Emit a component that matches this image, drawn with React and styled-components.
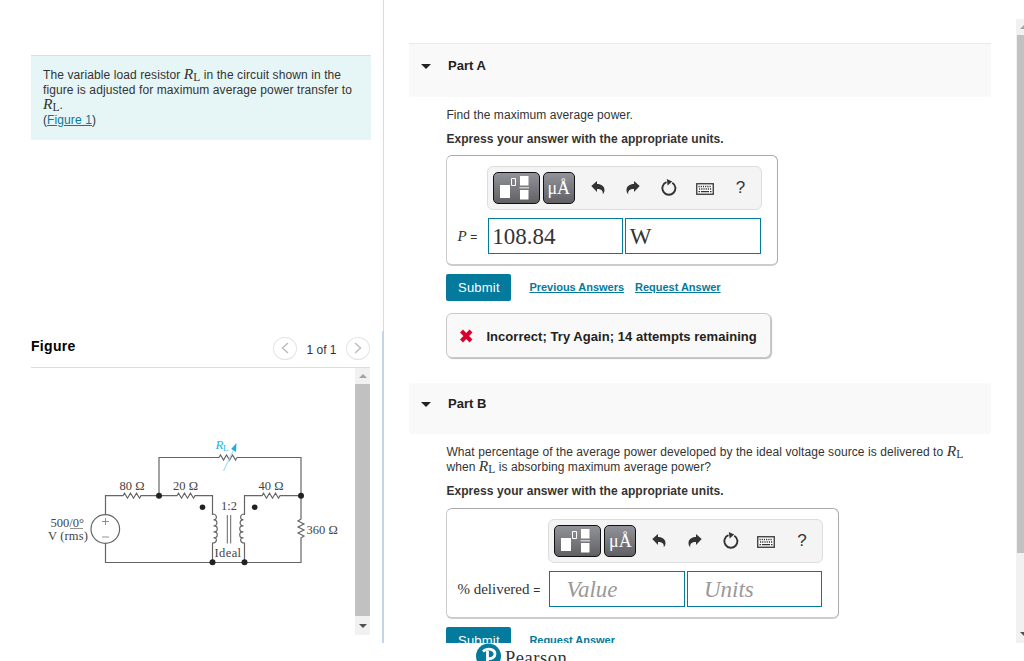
import React from "react"
import styled, { createGlobalStyle } from "styled-components"

const GlobalStyle = createGlobalStyle`
  * { box-sizing: border-box; }
  body {
    margin: 0;
    background: #fff;
    color: #333;
    font-family: "Liberation Sans", Arial, sans-serif;
    font-size: 12px;
    overflow: hidden;
  }
`

const StyledPage = styled.div`
  height: 661px;
  width: 1024px;
  display: flex;
  flex-direction: column;
  overflow: hidden;
`

const StyledMain = styled.div`
  display: flex;
  height: 643px;
  flex: none;
  overflow: hidden;
`

const StyledSide = styled.div`
  width: 384px;
  flex: none;
  display: flex;
  flex-direction: column;
`

const StyledIntro = styled.div`
  height: 331px;
  padding: 55px 12px 0 31px;
  border-right: 1px solid #d3dae2;
`

const StyledProblem = styled.div`
  height: 85px;
  padding: 12px 12px 0;
  background: #e6f6f6;
  border-top: 1px solid #dcdfdf;
  letter-spacing: 0.1px;
  line-height: 15px;
  white-space: nowrap;
`

const StyledFigureArea = styled.div`
  height: 312px;
  padding: 0 12px 0 31px;
  border-right: 2px solid #c3d5e6;
`

const StyledFigureHead = styled.div`
  height: 37px;
  display: flex;
  align-items: center;
  border-bottom: 1px solid #dcdcdc;
`

const StyledFigureTitle = styled.div`
  flex: 1;
  color: #000;
  font-size: 14px;
  font-weight: bold;
  letter-spacing: 0.3px;
  padding-bottom: 7px;
`

const StyledPager = styled.div`
  display: flex;
  align-items: center;
  gap: 9px;
  padding-bottom: 2px;
`

const StyledPagerText = styled.div`
  width: 31px;
  padding-top: 3px;
  text-align: center;
  white-space: nowrap;
`

const RoundButton = styled.div`
  width: 24px;
  height: 23px;
  border: 1px solid #e4e4e4;
  border-radius: 50%;
  display: flex;
  align-items: center;
  justify-content: center;
`

const StyledFigureBody = styled.div`
  display: flex;
  height: 267px;
`

const StyledScrollbar = styled.div`
  width: ${({ $width }) => $width}px;
  height: ${({ $height }) => $height}px;
  margin-top: ${({ $top }) => $top || 0}px;
  flex: none;
  overflow: hidden;
  display: flex;
  flex-direction: column;
  background: #f1f1f1;
`

const StyledScrollEnd = styled.div`
  height: ${({ $height }) => $height}px;
  flex: none;
  display: flex;
  align-items: center;
  justify-content: ${({ $cut }) => ($cut ? "flex-start" : "center")};
  padding-left: ${({ $cut }) => ($cut ? 4 : 0)}px;
`

const StyledThumb = styled.div`
  height: ${({ $height }) => $height}px;
  flex: none;
  background: #c1c1c1;
  border-left: ${({ $edge }) => ($edge ? "1px solid #f1f1f1" : "0")};
`

const StyledTrack = styled.div`
  flex: 1;
`

const Triangle = styled.div`
  width: 0;
  flex: none;
  border: ${({ $size }) => $size}px solid transparent;
  border-${({ $up }) => ($up ? "bottom" : "top")}-color: ${({ $color }) => $color};
  border-${({ $up }) => ($up ? "top" : "bottom")}-width: 0;
`

const StyledContent = styled.div`
  flex: 1;
  display: flex;
  justify-content: space-between;
  padding-left: 25px;
`

const StyledParts = styled.div`
  width: 582px;
`

const StyledPartHead = styled.div`
  display: flex;
  height: ${({ $first }) => ($first ? 54 : 51)}px;
  margin-top: ${({ $first }) => ($first ? 43 : 25)}px;
  padding: ${({ $first }) => ($first ? "14px 0 0 12px" : "13px 0 0 12px")};
  gap: 17px;
  background: #f9f9f9;
  border-top: ${({ $first }) => ($first ? "1px solid #ebebeb" : "0")};

  ${Triangle} {
    margin-top: 6px;
  }
`

const StyledPartTitle = styled.div`
  color: #222;
  font-size: 13px;
  font-weight: bold;
  line-height: 16px;
`

const StyledPartBody = styled.div`
  padding: 11px 0 0 37.400px;
`

const StyledQuestion = styled.div`
  letter-spacing: 0.08px;
  line-height: 15px;
  white-space: nowrap;
`

const StyledInstruction = styled.div`
  margin-top: 9px;
  font-weight: bold;
  letter-spacing: 0.07px;
  line-height: 15px;
`

const StyledAnswerBox = styled.div`
  width: ${({ $width }) => $width}px;
  height: 111px;
  margin-top: ${({ $top }) => $top}px;
  padding: 10px 15px 0 10px;
  border: 1px solid #aaa;
  border-bottom: 2px solid #ccc;
  border-left-color: #ccc;
  border-radius: 6px;
  display: flex;
  flex-direction: column;
  align-items: flex-end;
  gap: 8px;
`

const StyledToolbar = styled.div`
  width: 275px;
  height: 44px;
  padding: 0 0 1px 5px;
  display: flex;
  align-items: center;
  background: #f4f4f4;
  border: 1px solid #ddd;
  border-radius: 6px;
`

const ToolButton = styled.div`
  width: ${({ $width }) => $width}px;
  height: 32px;
  flex: none;
  margin-right: 3px;
  padding: ${({ $pad }) => $pad};
  display: flex;
  align-items: center;
  justify-content: center;
  color: #fff;
  font-family: "Liberation Serif", serif;
  font-size: 18px;
  background: linear-gradient(#92929a, #606064);
  border: 1px solid #111;
  border-radius: 5px;
`

const StyledTools = styled.div`
  display: grid;
  grid-template-columns: repeat(5, 35.700px);
  justify-items: center;
  align-items: center;
  padding-left: 2px;
`

const StyledHelp = styled.div`
  font-size: 17px;
  line-height: 20px;
  color: #333;
`

const StyledFields = styled.div`
  display: flex;
  align-self: stretch;
  align-items: center;
  margin-right: 1px;
`

const StyledLabel = styled.div`
  flex: 1;
  white-space: nowrap;
  font-family: "Liberation Serif", serif;
  font-size: 15px;

  small {
    font-size: 12px;
    font-family: "Liberation Sans", sans-serif;
  }
`

const StyledField = styled.div`
  width: 135.500px;
  height: 36px;
  margin-left: ${({ $gap }) => $gap || 0}px;
  padding-left: ${({ $empty }) => ($empty ? 16 : 3.5)}px;
  border: 1px solid #047a9c;
  color: ${({ $empty }) => ($empty ? "#999" : "#333")};
  font-family: "Liberation Serif", serif;
  font-size: 23px;
  font-style: ${({ $empty }) => ($empty ? "italic" : "normal")};
  line-height: 35px;
`

const StyledActions = styled.div`
  display: flex;
  align-items: center;
  margin-top: 8px;
`

const SubmitButton = styled.div`
  width: 65px;
  height: 27px;
  margin-right: 18px;
  background: #047a9c;
  border-radius: 2px;
  color: #fff;
  font-size: 13px;
  letter-spacing: 0.2px;
  line-height: 27px;
  text-align: center;
`

const StyledLink = styled.a`
  color: #047a9c;
  text-decoration: underline;
`

const ActionLink = styled(StyledLink)`
  font-size: 11px;
  font-weight: bold;
  letter-spacing: -0.02px;
  margin-right: 11px;
  padding-bottom: 2px;
`

const StyledFeedback = styled.div`
  width: 325px;
  height: 45px;
  margin-top: 12px;
  padding: 1px 0 0 12px;
  display: flex;
  align-items: center;
  gap: 12px;
  background: #f9f9f9;
  border: 1px solid #c9c9c9;
  border-radius: 6px;
  box-shadow: 1px 1px 1px #bbb;
  color: #222;
  font-size: 13px;
  font-weight: bold;
  letter-spacing: 0.05px;
  white-space: nowrap;
`

const StyledMath = styled.span`
  font-family: "Liberation Serif", serif;
  font-size: 15.500px;
  letter-spacing: 0;
  line-height: 1px;

  sub {
    font-size: 11.500px;
    line-height: 0;
    vertical-align: -2px;
  }
`

const StyledFooter = styled.div`
  height: 18px;
  padding-left: 476px;
  display: flex;
  overflow: hidden;
  gap: 4px;
`

const StyledBrand = styled.div`
  padding-top: 4px;
  font-family: "Liberation Serif", serif;
  font-size: 18.500px;
  line-height: 22px;
  letter-spacing: 0.550px;
  color: #333;
`

const Load = () => (
  <StyledMath>
    <i>R</i>
    <sub>L</sub>
  </StyledMath>
)

const Chevron = ({ flip }) => (
  <svg width="8" height="12" viewBox="0 0 8 12" fill="none" stroke="#bbb" strokeWidth="1.4">
    <path d={flip ? "M1 1l5.5 5L1 11" : "M7 1L1.5 6 7 11"} />
  </svg>
)

const TemplateIcon = () => (
  <svg width="32" height="26" viewBox="0 0 32 26">
    <path fill="#fff" d="M1 10h10v13H1zM21 1h8.500v9.500h-8.500zM21 15h8.500v9.500h-8.500z" />
    <path fill="#ccc" d="M20.500 12h9.500v1.500h-9.500z" />
    <path fill="none" stroke="#fff" d="M12.500 3.500h4v7h-4z" />
  </svg>
)

const ArrowIcon = ({ flip }) => (
  <svg width="14" height="14" viewBox="0 0 14 14">
    <path
      fill="#333"
      transform={flip ? "translate(14 0) scale(-1 1)" : undefined}
      d="M.3 5L6 0v3c4.500 0 7.500 2.400 7.500 6 0 1.600-.5 3-1.700 4.300.4-3.500-1.400-5.300-5.800-5.300v3z"
    />
  </svg>
)

const ResetIcon = () => (
  <svg width="16" height="17" viewBox="0 0 16 17">
    <path fill="none" stroke="#333" strokeWidth="1.900" d="M11.300 3.700A6.500 6.500 0 1 1 5.500 3.200" />
    <path fill="#333" d="M5.800 0l5.400 2.600-4.600 3.800z" />
  </svg>
)

const KeyboardIcon = () => (
  <svg width="18" height="15" viewBox="0 -3 18 15">
    <rect x=".75" y=".75" width="16.500" height="10.500" fill="#fff" stroke="#333" strokeWidth="1.300" />
    <path
      stroke="#333"
      strokeWidth="1.300"
      d="M2.500 3.500h13M3 6h12.500"
      strokeDasharray="1.200 1"
    />
    <path stroke="#333" strokeWidth="1.300" d="M2.500 8.700h1.600M5 8.700h8M14 8.700h1.500" />
  </svg>
)

const CrossIcon = () => (
  <svg width="15" height="14" viewBox="0 0 15 14">
    <path stroke="#d9002b" strokeWidth="4" d="M2.500 2l9.500 10M12 2L2.500 12" />
  </svg>
)

const Circuit = () => (
  <svg width="324" height="267" viewBox="31 368 324 267">
    <g fill="none" stroke="#666" strokeWidth="1.200">
      <path d="M105.500 515V495.700H123l1.500-2.500 3 5 3-5 3 5 3-5 3 5 1.500-2.500H177l1.500-2.500 3 5 3-5 3 5 3-5 3 5 1.500-2.500H212.500V515" />
      <path d="M159 495.700V457.500H219l1.500-2.500 3 5 3-5 3 5 3-5 3 5 1.500-2.500H301V519l-3 2 6 3-6 3 6 3-6 3 6 3-3 2V562.500H105.500V543" />
      <path d="M244.500 515V495.700H262l1.500-2.500 3 5 3-5 3 5 3-5 3 5 1.500-2.500H301" />
      <path d="M212.500 514c5 0 5 6 1 6 4-1 5 6 0 6 5-1 5 6 0 6 5-1 5 6 0 6 4-1 4 5-1 5V562" />
      <path d="M244.500 514c-5 0-5 6-1 6-4-1-5 6 0 6-5-1-5 6 0 6-5-1-5 6 0 6-4-1-4 5 1 5V562" />
      <path d="M227.300 515V543.500M230.700 515V543.500" strokeWidth="1" />
      <circle cx="105.300" cy="529" r="14.300" />
      <path d="M102 521.500h7M105.500 518v7M102 537h7" strokeWidth=".7" />
      <path d="M70 528.500h13" strokeWidth=".7" />
      <path d="M223.500 471L233 451" stroke="#a6e2f5" />
    </g>
    <path fill="#16aee5" d="M236.500 443l-.5 9-4.800-3z" />
    <g fill="#222">
      <circle cx="159" cy="495.700" r="3" />
      <circle cx="301" cy="495.700" r="3" />
      <circle cx="202.500" cy="507.300" r="2.800" />
      <circle cx="254.700" cy="507.300" r="2.800" />
      <circle cx="212.500" cy="562.300" r="3" />
      <circle cx="244.500" cy="562.300" r="3" />
    </g>
    <g fill="#444" fontFamily="Liberation Serif, serif" fontSize="12.500">
      <text x="119.500" y="489.500">80 Ω</text>
      <text x="173" y="489.500">20 Ω</text>
      <text x="258.500" y="489.500">40 Ω</text>
      <text x="306.500" y="533.500">360 Ω</text>
      <text x="50.500" y="527">500/0°</text>
      <text x="48" y="540" letterSpacing=".15">V (rms)</text>
      <text x="221" y="510">1:2</text>
      <text x="214.500" y="557" letterSpacing=".4">Ideal</text>
      <text x="215.500" y="449" fill="#1db3e8" fontStyle="italic" fontSize="13">R</text>
      <text x="223" y="451" fill="#1db3e8" fontSize="9">L</text>
    </g>
  </svg>
)

const PearsonMark = () => (
  <svg width="25" height="25" viewBox="0 0 25 25">
    <circle cx="12.500" cy="13" r="12.500" fill="#047a9c" />
    <path
      fill="none"
      stroke="#fff"
      strokeWidth="2.800"
      d="M7 8.500C11 4.500 19 6 19 11c0 3.500-3.500 5-7 4.500M11.500 8v14"
    />
  </svg>
)

const Toolbar = () => (
  <StyledToolbar>
    <ToolButton $width={47} $pad="0 3px 0 0">
      <TemplateIcon />
    </ToolButton>
    <ToolButton $width={32} $pad="2px 0 0">
      μÅ
    </ToolButton>
    <StyledTools>
      <ArrowIcon />
      <ArrowIcon flip />
      <ResetIcon />
      <KeyboardIcon />
      <StyledHelp>?</StyledHelp>
    </StyledTools>
  </StyledToolbar>
)

const PartHead = ({ title, first }) => (
  <StyledPartHead $first={first}>
    <Triangle $size={5} $color="#222" />
    <StyledPartTitle>{title}</StyledPartTitle>
  </StyledPartHead>
)

const App = () => {
  return (
    <StyledPage>
      <GlobalStyle />
      <StyledMain>
        <StyledSide>
          <StyledIntro>
            <StyledProblem>
              The variable load resistor <Load /> in the circuit shown in the
              <br />
              figure is adjusted for maximum average power transfer to
              <br />
              <Load />.
              <br />
              (<StyledLink>Figure 1</StyledLink>)
            </StyledProblem>
          </StyledIntro>

          <StyledFigureArea>
            <StyledFigureHead>
              <StyledFigureTitle>Figure</StyledFigureTitle>
              <StyledPager>
                <RoundButton>
                  <Chevron />
                </RoundButton>
                <StyledPagerText>1 of 1</StyledPagerText>
                <RoundButton>
                  <Chevron flip />
                </RoundButton>
              </StyledPager>
            </StyledFigureHead>
            <StyledFigureBody>
              <Circuit />
              <StyledScrollbar $width={15} $height={267}>
                <StyledScrollEnd $height={16}>
                  <Triangle $size={4} $up $color="#a3a3a3" />
                </StyledScrollEnd>
                <StyledThumb $height={232} />
                <StyledScrollEnd $height={19}>
                  <Triangle $size={4} $color="#505050" />
                </StyledScrollEnd>
              </StyledScrollbar>
            </StyledFigureBody>
          </StyledFigureArea>
        </StyledSide>

        <StyledContent>
          <StyledParts>
            <PartHead title="Part A" first />
            <StyledPartBody>
              <StyledQuestion>Find the maximum average power.</StyledQuestion>
              <StyledInstruction>Express your answer with the appropriate units.</StyledInstruction>
              <StyledAnswerBox $width={331.4} $top={8}>
                <Toolbar />
                <StyledFields>
                  <StyledLabel>
                    <i>P</i> <small>=</small>
                  </StyledLabel>
                  <StyledField>108.84</StyledField>
                  <StyledField $gap={2}>W</StyledField>
                </StyledFields>
              </StyledAnswerBox>
              <StyledActions>
                <SubmitButton>Submit</SubmitButton>
                <ActionLink>Previous Answers</ActionLink>
                <ActionLink>Request Answer</ActionLink>
              </StyledActions>
              <StyledFeedback>
                <CrossIcon />
                Incorrect; Try Again; 14 attempts remaining
              </StyledFeedback>
            </StyledPartBody>

            <PartHead title="Part B" />
            <StyledPartBody>
              <StyledQuestion>
                What percentage of the average power developed by the ideal voltage source is delivered to <Load />
                <br />
                when <Load /> is absorbing maximum average power?
              </StyledQuestion>
              <StyledInstruction>Express your answer with the appropriate units.</StyledInstruction>
              <StyledAnswerBox $width={393} $top={9}>
                <Toolbar />
                <StyledFields>
                  <StyledLabel>
                    % delivered <small>=</small>
                  </StyledLabel>
                  <StyledField $empty>Value</StyledField>
                  <StyledField $empty $gap={2}>
                    Units
                  </StyledField>
                </StyledFields>
              </StyledAnswerBox>
              <StyledActions>
                <SubmitButton>Submit</SubmitButton>
                <ActionLink>Request Answer</ActionLink>
              </StyledActions>
            </StyledPartBody>
          </StyledParts>

          <StyledScrollbar $width={8} $height={624} $top={19}>
            <StyledScrollEnd $height={16} $cut>
              <Triangle $size={4} $up $color="#a3a3a3" />
            </StyledScrollEnd>
            <StyledThumb $height={518} $edge />
            <StyledTrack />
            <StyledScrollEnd $height={18} $cut>
              <Triangle $size={4} $color="#505050" />
            </StyledScrollEnd>
          </StyledScrollbar>
        </StyledContent>
      </StyledMain>

      <StyledFooter>
        <PearsonMark />
        <StyledBrand>Pearson</StyledBrand>
      </StyledFooter>
    </StyledPage>
  )
}

export default App
